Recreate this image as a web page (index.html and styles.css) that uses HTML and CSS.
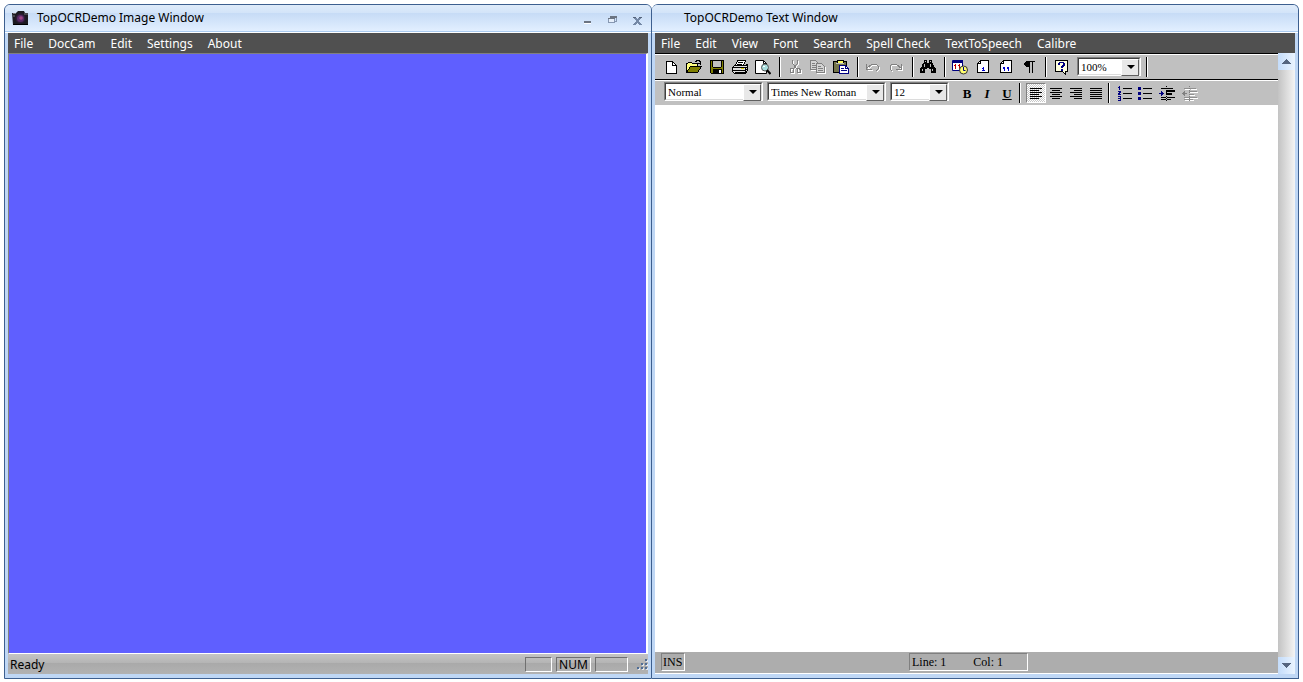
FILE: index.html
```html
<!DOCTYPE html>
<html lang="en">
<head>
    <meta charset="UTF-8">
    <meta name="viewport" content="width=device-width, initial-scale=1.0">
    <title>TopOCRDemo</title>
    <link rel="stylesheet" href="styles.css">
</head>
<body>
    <!-- Image window -->
    <section class="window image-window">
        <header class="titlebar">
            <svg class="app-icon smooth" width="17" height="16" viewBox="0 0 17 16">
                <path d="M0 3h4l2-2h6l1 2h3v12H1z" fill="#1c1a20"/>
                <path d="M1 3.500h3M12 4h4M1 6h2" stroke="#77747c"/>
                <circle cx="8.5" cy="8.500" r="5" fill="#2d1c36"/>
                <circle cx="8.5" cy="8.500" r="3.500" fill="#5b2a68"/>
                <circle cx="9" cy="8" r="1.800" fill="#a04583"/>
                <path d="M1 14.500h15" stroke="#000"/>
            </svg>
            <h1 class="title">TopOCRDemo Image Window</h1>
            <div class="window-buttons">
                <button type="button" aria-label="Minimize">
                    <svg width="12" height="12" viewBox="0 0 12 12"><path d="M3 7h7v2H3z" fill="#6b7482"/><path d="M3 9h7v1H3z" fill="#fff"/></svg>
                </button>
                <button type="button" aria-label="Restore">
                    <svg width="12" height="12" viewBox="0 0 12 12"><path d="M4 2.500h6.500v5H9" fill="none" stroke="#8798b2"/><path d="M4 2h7v2H4z" fill="#6b7482"/><path d="M2.500 4.500h6v4h-6z" fill="#e6effb" stroke="#8798b2"/><path d="M2 4h7v1H2z" fill="#6b7482"/></svg>
                </button>
                <button type="button" aria-label="Close">
                    <svg width="12" height="12" viewBox="0 0 12 12"><path d="M2 3h3l1 2 2-2h3L8 7l3 4H8L6 9l-2 2H1l4-4z" fill="#7488a6"/><path d="M2 3h3M8 3h3" stroke="#56657c"/></svg>
                </button>
            </div>
        </header>
        <nav class="menubar">
            <button type="button">File</button>
            <button type="button">DocCam</button>
            <button type="button">Edit</button>
            <button type="button">Settings</button>
            <button type="button">About</button>
        </nav>
        <div class="canvas"></div>
        <footer class="image-status">
            <span class="ready">Ready</span>
            <span class="cell cell-small"></span>
            <span class="cell cell-num">NUM</span>
            <span class="cell cell-wide"></span>
            <svg class="grip" width="12" height="12" viewBox="0 0 12 12">
                <path d="M10 2h2v2h-2zM10 6h2v2h-2zM10 10h2v2h-2zM6 6h2v2H6zM6 10h2v2H6zM2 10h2v2H2z" fill="#e4e8ee"/>
                <path d="M9 1h2v2H9zM9 5h2v2H9zM9 9h2v2H9zM5 5h2v2H5zM5 9h2v2H5zM1 9h2v2H1z" fill="#4f6d96"/>
            </svg>
        </footer>
    </section>

    <!-- Text window -->
    <section class="window text-window">
        <header class="titlebar">
            <h1 class="title">TopOCRDemo Text Window</h1>
        </header>
        <nav class="menubar">
            <button type="button">File</button>
            <button type="button">Edit</button>
            <button type="button">View</button>
            <button type="button">Font</button>
            <button type="button">Search</button>
            <button type="button">Spell Check</button>
            <button type="button">TextToSpeech</button>
            <button type="button">Calibre</button>
        </nav>
        <div class="workspace">
            <main class="editor">
                <div class="toolbar">
                    <button type="button" class="tool" aria-label="New">
                        <svg width="16" height="16" viewBox="0 0 16 16"><path d="M3.500 2.500h6l4 4v8h-10z" fill="#fff" stroke="#000"/><path d="M9.500 2.500v4h4" fill="none" stroke="#000"/></svg>
                    </button>
                    <button type="button" class="tool" aria-label="Open">
                        <svg width="16" height="16" viewBox="0 0 16 16"><path d="M.5 13.500v-9h1l1-1h3l1 1h5v3" fill="#ffff80" stroke="#000"/><path d="M.5 13.500l4-6h11l-4 6z" fill="#808000" stroke="#000"/><path d="M9 2.500h1l1-1h2l1 1v2M12 4.500h3M14 5v1" fill="none" stroke="#000"/></svg>
                    </button>
                    <button type="button" class="tool" aria-label="Save">
                        <svg width="16" height="16" viewBox="0 0 16 16"><path d="M1.500 1.500h13v13h-12l-1-1z" fill="#808000" stroke="#000"/><path d="M4 2h8v6H4z" fill="#c0c0c0"/><path d="M3.500 2v6M12.500 2v6M4 8.500h8" stroke="#000"/><path d="M4 10h9v4H4z" fill="#000"/><path d="M10 11h2v3h-2z" fill="#fff"/></svg>
                    </button>
                    <button type="button" class="tool" aria-label="Print">
                        <svg width="16" height="16" viewBox="0 0 16 16"><path d="M5.500 1.500h8l-2 5h-8z" fill="#fff" stroke="#000"/><path d="M6 3.500h5M5 5.500h5" stroke="#000"/><path d="M.5 8.500l2-2h11l2-1v6l-2 3h-11l-2-2z" fill="#dedede" stroke="#000"/><path d="M1 8.500h12M1 11.500h12M13.500 8v6M3 13.500h10" stroke="#000"/><path d="M9 9.500h3" stroke="#e0d000"/><path d="M14 8h1v1h-1zM14 10h1v1h-1z" fill="#000"/></svg>
                    </button>
                    <button type="button" class="tool" aria-label="Print preview">
                        <svg class="smooth" width="16" height="16" viewBox="0 0 16 16"><path d="M.5 1.500h8l3 3v10H.5z" fill="#fff" stroke="#000"/><path d="M8.500 1.500v3h3" fill="none" stroke="#000"/><circle cx="10" cy="8.500" r="3.500" fill="#a8dede" stroke="#555"/><path d="M12 11l3.500 4" stroke="#000" stroke-width="2"/><path d="M8 7h2v1H8z" fill="#fff"/></svg>
                    </button>
                    <span class="separator"></span>
                    <button type="button" class="tool" aria-label="Cut" disabled>
                        <svg width="16" height="16" viewBox="0 0 16 16"><g transform="translate(1 1)" fill="none" stroke="#fff"><path d="M5.500 1v3l4 6M10.500 1v3l-4 6"/><path d="M4 9.500h2v4H3v-3zM10 9.500h2l1 1v3h-3z"/></g><g fill="none" stroke="#808080"><path d="M5.500 1v3l4 6M10.500 1v3l-4 6"/><path d="M4 9.500h2v4H3v-3zM10 9.500h2l1 1v3h-3z"/></g></svg>
                    </button>
                    <button type="button" class="tool" aria-label="Copy" disabled>
                        <svg width="16" height="16" viewBox="0 0 16 16"><g fill="none" stroke="#fff" transform="translate(1 1)"><path d="M.5 1.500h5l3 3v6h-8zM6.500 4.500h5l3 3v6h-8z"/></g><g fill="#d4d4d4" stroke="#808080"><path d="M.5 1.500h5l3 3v6h-8z"/><path d="M6.500 4.500h5l3 3v6h-8z"/><path d="M2 4.500h3M2 6.500h4M2 8.500h4M8 7.500h3M8 9.500h5M8 11.500h5"/></g></svg>
                    </button>
                    <button type="button" class="tool" aria-label="Paste">
                        <svg width="16" height="16" viewBox="0 0 16 16"><path d="M.5 2.500h13v11H.5z" fill="#74744a" stroke="#000"/><path d="M4 1h6v3H4z" fill="#ffff60" stroke="#000"/><path d="M3 4.500h8" stroke="#c0c0c0"/><path d="M6.500 6.500h6l3 3v5h-9z" fill="#fff" stroke="#000080"/><path d="M12.500 7v2.500H15M8 9.500h3M8 11.500h6" fill="none" stroke="#000080"/></svg>
                    </button>
                    <span class="separator"></span>
                    <button type="button" class="tool" aria-label="Undo" disabled>
                        <svg width="16" height="16" viewBox="0 0 16 16"><path d="M3 6.500v5h5M4 10l3-3 2-1h3l2 2v3l-2 2" fill="none" stroke="#fff"/><path d="M1.500 5v5H7M2 9l4-3 2-1h3l2 2v3l-2 2" fill="none" stroke="#808080"/></svg>
                    </button>
                    <button type="button" class="tool" aria-label="Redo" disabled>
                        <svg width="16" height="16" viewBox="0 0 16 16"><path d="M14.500 6.500v5h-5M13 10l-3-3-2-1H5L3 8v3l2 2" fill="none" stroke="#fff"/><path d="M13.500 5v5H8M13 9L9 6 7 5H4L2 7v3l2 2" fill="none" stroke="#808080"/></svg>
                    </button>
                    <span class="separator"></span>
                    <button type="button" class="tool" aria-label="Find">
                        <svg width="16" height="16" viewBox="0 0 16 16"><path d="M4 1h3v3h2V1h3v3h1l1 3 2 3v4h-5v-4H9v-1H7v1H5v4H0v-4l2-3 1-3h1z" fill="#000"/><path d="M5 2h1v1H5zM10 2h1v1h-1zM4 5h1v3H4zM10 5h1v3h-1zM2 10h1v2H2zM12 10h1v2h-1z" fill="#c0c0c0"/></svg>
                    </button>
                    <span class="separator"></span>
                    <button type="button" class="tool" aria-label="Date and time">
                        <svg class="smooth" width="16" height="16" viewBox="0 0 16 16"><path d="M.5 1.500h10v10H.5z" fill="#fff" stroke="#000080"/><path d="M1 1h10v3H1z" fill="#000080"/><path d="M3 5h1v5H3zM7 5h1v5H7zM2 6h1v1H2zM6 6h1v1H6z" fill="#c00000"/><circle cx="11.500" cy="11" r="4" fill="#ffff70" stroke="#333"/><path d="M11.500 8v3.500h2" fill="none" stroke="#000080"/></svg>
                    </button>
                    <button type="button" class="tool" aria-label="Page number">
                        <svg width="16" height="16" viewBox="0 0 16 16"><path d="M5.500 1.500h8v12h-11v-9z" fill="#fff" stroke="#000"/><path d="M5.500 1.500v3h-3" fill="none" stroke="#000"/><path d="M8 8h1v4H8zM7 9h1v1H7zM7 11h3v1H7z" fill="#0000d0"/></svg>
                    </button>
                    <button type="button" class="tool" aria-label="Page count">
                        <svg width="16" height="16" viewBox="0 0 16 16"><path d="M5.500 1.500h8v12h-11v-9z" fill="#fff" stroke="#000"/><path d="M5.500 1.500v3h-3" fill="none" stroke="#000"/><path d="M5 8h2v2H5zM6 10h1v2H6zM9 8h2v2H9zM10 10h1v2h-1z" fill="#0000d0"/></svg>
                    </button>
                    <button type="button" class="tool" aria-label="Show marks">
                        <svg width="16" height="16" viewBox="0 0 16 16"><path d="M5 2h9v1h-2v11h-1V3h-2v11H8V8H5V7H4V6H3V4h1V3h1z" fill="#000"/></svg>
                    </button>
                    <span class="separator"></span>
                    <button type="button" class="tool" aria-label="Help">
                        <svg width="16" height="16" viewBox="0 0 16 16"><path d="M2.500 1.500h12v11h-2v3l-3-3h-7z" fill="#ffffe0" stroke="#000"/><path d="M6 3h5v1h1v3h-1v1h-1v1H8V7h1V6h1V4H7v2H5V4h1zM8 10h2v2H8z" fill="#000080"/></svg>
                    </button>
                    <span class="combo combo-zoom">
                        <select aria-label="Zoom"><option>100%</option></select>
                    </span>
                    <span class="separator"></span>
                </div>
                <div class="toolbar format-bar">
                    <span class="combo combo-style">
                        <select aria-label="Style"><option>Normal</option></select>
                    </span>
                    <span class="combo combo-font">
                        <select aria-label="Font"><option>Times New Roman</option></select>
                    </span>
                    <span class="combo combo-size">
                        <select aria-label="Font size"><option>12</option></select>
                    </span>
                    <button type="button" class="tool letter bold">B</button>
                    <button type="button" class="tool letter italic">I</button>
                    <button type="button" class="tool letter underline">U</button>
                    <span class="separator"></span>
                    <button type="button" class="tool pressed" aria-label="Align left">
                        <svg width="14" height="14" viewBox="0 0 14 14"><path d="M1 2.500h12M1 4.500h9M1 6.500h12M1 8.500h9M1 10.500h12M1 12.500h9" stroke="#000"/></svg>
                    </button>
                    <button type="button" class="tool" aria-label="Center">
                        <svg width="14" height="14" viewBox="0 0 14 14"><path d="M1 2.500h12M3 4.500h8M1 6.500h12M3 8.500h8M1 10.500h12M3 12.500h8" stroke="#000"/></svg>
                    </button>
                    <button type="button" class="tool" aria-label="Align right">
                        <svg width="14" height="14" viewBox="0 0 14 14"><path d="M1 2.500h12M5 4.500h8M1 6.500h12M5 8.500h8M1 10.500h12M5 12.500h8" stroke="#000"/></svg>
                    </button>
                    <button type="button" class="tool" aria-label="Justify">
                        <svg width="14" height="14" viewBox="0 0 14 14"><path d="M1 2.500h12M1 4.500h12M1 6.500h12M1 8.500h12M1 10.500h12M1 12.500h12" stroke="#000"/></svg>
                    </button>
                    <span class="separator"></span>
                    <button type="button" class="tool" aria-label="Numbered list">
                        <svg width="16" height="16" viewBox="0 0 16 16"><path d="M6 3.500h9M6 8.500h9M6 13.500h9" stroke="#000"/><path d="M2.500 1v4M1 2.500h1M1 6.500h2v1H2v1H1v1h3M1 11.500h2v4H1M1 13.500h2" fill="none" stroke="#000080"/></svg>
                    </button>
                    <button type="button" class="tool" aria-label="Bullet list">
                        <svg width="16" height="16" viewBox="0 0 16 16"><path d="M6 3.500h9M6 8.500h9M6 13.500h9" stroke="#000"/><path d="M1 2h3v3H1zM1 7h3v3H1zM1 12h3v3H1z" fill="#000080"/></svg>
                    </button>
                    <button type="button" class="tool indent" aria-label="Increase indent">
                        <svg width="16" height="16" viewBox="0 0 16 16"><path d="M2 3.500h5M8 3.500h6M2 12.500h5M8 12.500h8M2 14.500h5M8 14.500h4" stroke="#000"/><path d="M7 5h9v2H7zM7 8h6v2H7z" fill="#000"/><path d="M7.500 1v15" stroke="#000" stroke-dasharray="1 1"/><path d="M0 8h2V6h1v1h1v1h1v1H4v1H3v1H2V9H0z" fill="#000080"/></svg>
                    </button>
                    <button type="button" class="tool indent" aria-label="Decrease indent" disabled>
                        <svg width="16" height="16" viewBox="0 0 16 16"><path d="M3 4.500h5M9 4.500h6M8 7.500h8M8 10.500h5M3 13.500h13M3 15.500h9" stroke="#fff"/><path d="M2 3.500h5M8 3.500h6M7 6.500h8M7 9.500h5M2 12.500h13M2 14.500h9" stroke="#909090"/><path d="M7.500 1v15" stroke="#808080" stroke-dasharray="1 1"/><path d="M5 8H3V6H2v1H1v1H0v1h1v1h1v1h1V9h2z" fill="#808080"/></svg>
                    </button>
                </div>
                <textarea class="page" aria-label="Document text"></textarea>
                <footer class="text-status">
                    <span class="cell cell-ins">INS</span>
                    <span class="cell cell-position"><span>Line: 1</span><span>Col: 1</span></span>
                </footer>
            </main>
            <div class="scrollbar">
                <button type="button" aria-label="Scroll up">
                    <svg width="9" height="5" viewBox="0 0 9 5"><path d="M4 0h1v1h1v1h1v1h1v1h1v1H0V4h1V3h1V2h1V1h1z" fill="#55657f"/></svg>
                </button>
                <button type="button" aria-label="Scroll down">
                    <svg width="9" height="5" viewBox="0 0 9 5"><path d="M0 0h9v1H8v1H7v1H6v1H5v1H4V4H3V3H2V2H1V1H0z" fill="#55657f"/></svg>
                </button>
            </div>
        </div>
    </section>
</body>
</html>
```
FILE: styles.css
```css
* {
    box-sizing: border-box;
}

body {
    display: flex;
    height: 100vh;
    margin: 0;
    padding: 4px 4px 3px;
    background: #fff;
    font-family: "Noto Sans", Tahoma, sans-serif;
    font-size: 12px;
    color: #000;
}

button {
    padding: 0;
    border: none;
    background: none;
    font: inherit;
    color: inherit;
}

svg {
    display: block;
    shape-rendering: crispEdges;
}

.smooth {
    shape-rendering: auto;
}

/* Windows */
.window {
    display: flex;
    flex: 1;
    flex-direction: column;
    min-width: 0;
    padding: 0 3px 4px;
    border: 1px solid #3d5f8f;
    border-radius: 6px 6px 0 0;
    background: #bfd7f5;
    overflow: hidden;
}

.text-window {
    border-left-width: 0;
}

.titlebar {
    display: flex;
    align-items: center;
    height: 28px;
    margin: 0 -3px;
    padding: 0 8px 2px 7px;
    border-bottom: 1px solid #fff;
    background: linear-gradient(#dfebf9, #d3e4f9 8px, #c6dbf6 8px, #e2efff 26px, #a9caef 26px);
}

.title {
    margin: 0 0 0 8px;
    font-size: 12px;
    font-weight: normal;
    line-height: 16px;
}

.text-window .title {
    margin-left: 25px;
}

.window-buttons {
    display: flex;
    gap: 13px;
    margin-left: auto;
    padding-top: 4px;
}

.menubar {
    display: flex;
    gap: 1px;
    height: 20px;
    background: #505050;
    color: #fff;
}

.menubar button {
    padding: 0 7px;
}

.menubar button:first-child {
    padding-left: 6px;
}

/* Image window */
.canvas {
    flex: 1;
    border: 1px solid;
    border-color: #808080 #fff #fff #808080;
    border-right-width: 2px;
    background: #5f5fff;
}

.image-status {
    display: flex;
    align-items: center;
    height: 20px;
    gap: 4px;
    padding-left: 2px;
    background: linear-gradient(#c4c4c4, #b4b4b4 9px, #a9a9a9 9px, #b2b2b2);
}

.ready {
    margin-right: auto;
}

.cell {
    height: 15px;
    border: 1px solid;
    border-color: #707070 #fff #fff #707070;
    line-height: 14px;
}

.cell-small {
    width: 27px;
}

.cell-num {
    width: 35px;
    text-align: center;
}

.cell-wide {
    width: 33px;
    margin-right: 4px;
}

/* Text window */
.workspace {
    display: flex;
    flex: 1;
    min-height: 0;
}

.editor {
    display: flex;
    flex: 1;
    flex-direction: column;
    min-width: 0;
    border-bottom: 1px solid #fff;
    font-family: "Liberation Serif", "Times New Roman", serif;
}

.toolbar {
    display: flex;
    align-items: center;
    height: 26px;
    padding-left: 4px;
    border-top: 1px solid #000;
    background: #c0c0c0;
    box-shadow: inset 0 1px #fff;
}

.tool {
    display: flex;
    align-items: center;
    justify-content: center;
    width: 23px;
    height: 20px;
}

.separator {
    width: 2px;
    height: 20px;
    margin: 0 2px 0 5px;
    border-left: 1px solid #000;
    border-right: 1px solid #fff;
}

.combo {
    position: relative;
    height: 19px;
    border: 1px solid;
    border-color: #808080 #fff #fff #808080;
}

.combo select {
    display: block;
    width: 100%;
    height: 17px;
    padding: 0 2px;
    border: 1px solid;
    border-color: #404040 #dcdcdc #dcdcdc #404040;
    border-radius: 0;
    appearance: none;
    background: #fff;
    font: 11px "Liberation Serif", "Times New Roman", serif;
    color: #000;
}

/* Drop-down button and its arrow */
.combo::before {
    content: '';
    position: absolute;
    top: 1px;
    right: 1px;
    width: 16px;
    height: 15px;
    border: 1px solid;
    border-color: #fff #606060 #606060 #fff;
    background: #e8e8e8;
    pointer-events: none;
}

.combo::after {
    content: '';
    position: absolute;
    top: 7px;
    right: 5px;
    border: 4px solid transparent;
    border-top-color: #000;
    border-bottom-width: 0;
    pointer-events: none;
}

.combo-zoom {
    width: 64px;
    margin-left: 5px;
}

.format-bar {
    padding-left: 9px;
}

.format-bar .combo {
    margin-bottom: 2px;
}

.format-bar .tool {
    width: 20px;
}

.format-bar .indent {
    width: 23px;
}

.format-bar .separator {
    margin: 0 5px 0 2px;
}

.combo-style {
    width: 99px;
    margin-right: 4px;
}

.combo-font {
    width: 119px;
    margin-right: 4px;
}

.combo-size {
    width: 59px;
    margin-right: 8px;
}

.letter {
    padding-top: 2px;
    font-size: 13px;
    font-weight: bold;
}

.italic {
    font-style: italic;
}

.underline {
    text-decoration: underline;
}

.pressed {
    border: 1px solid;
    border-color: #808080 #fff #fff #808080;
    background: repeating-conic-gradient(#fff 0 25%, #c8c8c8 0 50%) 0 0 / 2px 2px;
}

.page {
    flex: 1;
    padding: 8px;
    border: none;
    outline: none;
    background: #fff;
    font: 16px "Liberation Serif", "Times New Roman", serif;
    resize: none;
}

.text-status {
    display: grid;
    grid-template-columns: 1fr auto 1fr;
    align-items: center;
    height: 21px;
    padding: 0 2px 1px 6px;
    background: #adadad;
}

.text-status .cell {
    height: 18px;
    border-color: #808080 #fff #fff #808080;
    line-height: 16px;
}

.cell-ins {
    justify-self: start;
    width: 24px;
    padding-left: 1px;
}

.cell-position {
    display: flex;
    gap: 27px;
    width: 119px;
    padding-left: 2px;
}

.scrollbar {
    display: flex;
    flex-direction: column;
    justify-content: space-between;
    width: 17px;
    background: linear-gradient(to right, #c3c3c3, #f4f4f4);
}

.scrollbar button {
    display: flex;
    align-items: center;
    justify-content: center;
    height: 17px;
    background: linear-gradient(to right, #c4dcfa, #eaf4ff);
}
```
